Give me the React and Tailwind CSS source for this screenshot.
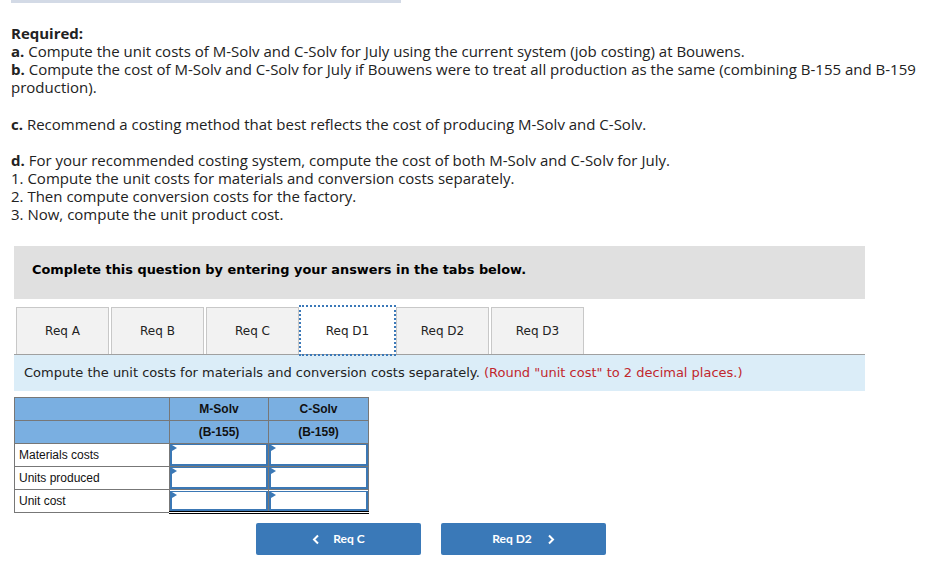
import React from "react";

const tabs = ["Req A", "Req B", "Req C", "Req D1", "Req D2", "Req D3"];

function Box({ h }) {
  return (
    <div className={"relative border-2 border-[#3b78b5] border-t-[1px] bg-white " + (h === 20 ? "h-[20px]" : "h-[22px]")}>
      <span className="absolute left-0 top-0 w-0 h-0 border-t-[3px] border-b-[3px] border-l-[5px] border-t-transparent border-b-transparent border-l-[#3b78b5]"></span>
    </div>
  );
}

function InputCell() {
  return (
    <td className="p-0 border border-[#777]">
      <Box h={22} />
    </td>
  );
}

function LastCell() {
  return (
    <td className="p-0 border border-[#777] border-b-[3px] border-b-black border-double">
      <Box h={20} />
    </td>
  );
}

export default function App() {
  return (
    <div className="w-[935px] h-[569px] bg-white overflow-hidden">
      <div className="ml-[11px] w-[390px] h-[3px] bg-[#d3dae6]"></div>
      <div className="px-[11px] pt-[21px] text-[15px] leading-[18px] text-[#222]" style={{ fontFamily: "'Open Sans', Lato, sans-serif" }}>
        <p>
          <b>Required:</b>
          <br />
          <b>a.</b> Compute the unit costs of M-Solv and C-Solv for July using the current system (job costing) at Bouwens.
          <br />
          <b>b.</b> Compute the cost of M-Solv and C-Solv for July if Bouwens were to treat all production as the same (combining B-155 and B-159 production).
        </p>
        <p className="mt-[19px]">
          <b>c.</b> Recommend a costing method that best reflects the cost of producing M-Solv and C-Solv.
        </p>
        <p className="mt-[18px]">
          <b>d.</b> For your recommended costing system, compute the cost of both M-Solv and C-Solv for July.
          <br />
          1. Compute the unit costs for materials and conversion costs separately.
          <br />
          2. Then compute conversion costs for the factory.
          <br />
          3. Now, compute the unit product cost.
        </p>
      </div>

      <div className="ml-[14px] w-[851px]" style={{ fontFamily: "'DejaVu Sans', Verdana, sans-serif" }}>
        <div className="mt-[23px] h-[53px] bg-[#e0e0e0] flex items-center pl-[18px] pb-[6px]">
          <span className="font-bold text-[12.9px] text-black">Complete this question by entering your answers in the tabs below.</span>
        </div>

        <div className="mt-[8px] flex gap-[2px] pl-[2px] h-[47px]">
          {tabs.map((t) => (
            <div
              key={t}
              className={
                t === "Req D1"
                  ? "w-[93px] h-[47px] flex items-center justify-center bg-white text-[12px] text-[#222] outline-2 outline-dotted outline-[#3a78b8]"
                  : "w-[93px] h-[47px] flex items-center justify-center bg-[#f2f2f2] border border-[#c8c8c8] border-b-0 text-[12px] text-[#222]"
              }
            >
              {t}
            </div>
          ))}
        </div>
        <div className="h-[37px] border-t border-[#a0a0a0] bg-[#dbedf8] flex items-center pl-[10px] text-[13px] text-[#222]">
          <span>
            Compute the unit costs for materials and conversion costs separately.{" "}
            <span className="text-[#c1272d]">(Round "unit cost" to 2 decimal places.)</span>
          </span>
        </div>

        <table
          className="mt-[6px] border-collapse text-[12px] text-[#111]"
          style={{ fontFamily: "'Liberation Sans', Arial, sans-serif" }}
        >
          <tbody>
            <tr className="bg-[#7aafe1] h-[23px]">
              <td className="w-[155px] border border-[#777]"></td>
              <td className="w-[99px] border border-[#777] text-center font-bold">M-Solv</td>
              <td className="w-[100px] border border-[#777] text-center font-bold">C-Solv</td>
            </tr>
            <tr className="bg-[#7aafe1] h-[23px]">
              <td className="border border-[#777]"></td>
              <td className="border border-[#777] text-center font-bold">(B-155)</td>
              <td className="border border-[#777] text-center font-bold">(B-159)</td>
            </tr>
            <tr>
              <td className="border border-[#777] pl-[4px] h-[23px]">Materials costs</td>
              <InputCell />
              <InputCell />
            </tr>
            <tr>
              <td className="border border-[#777] pl-[4px] h-[23px]">Units produced</td>
              <InputCell />
              <InputCell />
            </tr>
            <tr>
              <td className="border border-[#777] pl-[4px] h-[23px]">Unit cost</td>
              <LastCell />
              <LastCell />
            </tr>
          </tbody>
        </table>

        <div className="mt-[9px] ml-[242px] flex gap-[20px]" style={{ fontFamily: "Lato, 'Open Sans', sans-serif" }}>
          <button className="w-[165px] h-[32px] rounded-[2px] bg-[#3a79b8] text-white text-[12px] font-bold flex items-center justify-center gap-[13px]">
            <svg width="8" height="11" viewBox="0 0 8 11" fill="none" stroke="white" strokeWidth="2">
              <path d="M6 1.5 L2 5.5 L6 9.5" />
            </svg>
            <span>Req C</span>
          </button>
          <button className="w-[165px] h-[32px] rounded-[2px] bg-[#3a79b8] text-white text-[12px] font-bold flex items-center justify-center gap-[15px]">
            <span>Req D2</span>
            <svg width="8" height="11" viewBox="0 0 8 11" fill="none" stroke="white" strokeWidth="2">
              <path d="M2 1.5 L6 5.5 L2 9.5" />
            </svg>
          </button>
        </div>
      </div>
    </div>
  );
}
